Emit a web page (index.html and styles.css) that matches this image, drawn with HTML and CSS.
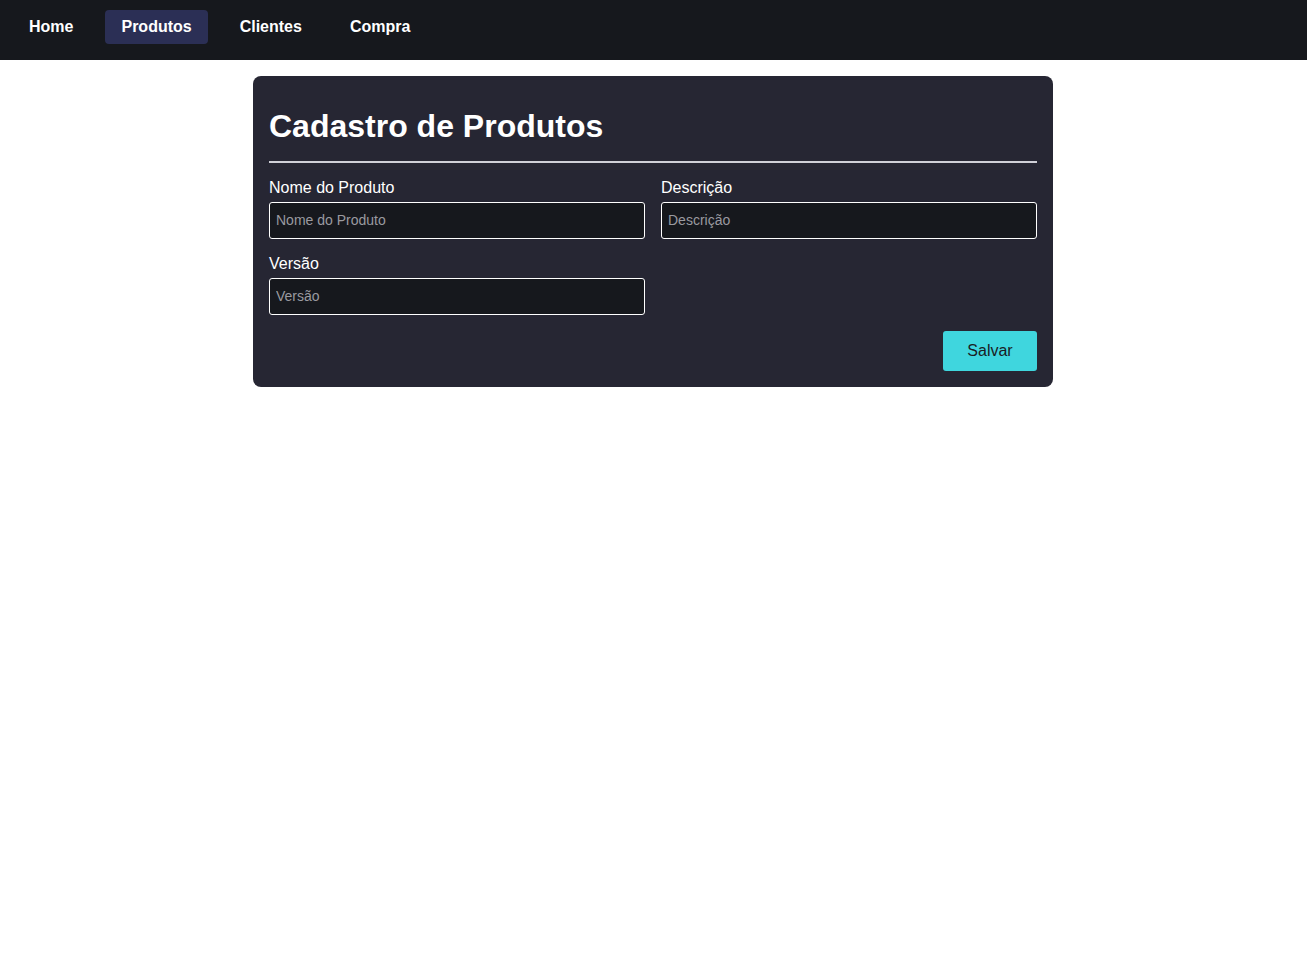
FILE: index.html
```html
<!DOCTYPE html>
<html lang="pt-BR">
<head>
<meta charset="utf-8">
<title>Cadastro de Produtos</title>
<link rel="stylesheet" href="styles.css">
</head>
<body>
<nav class="navbar">
  <a class="nav-link" href="#">Home</a>
  <a class="nav-link active" href="#">Produtos</a>
  <a class="nav-link" href="#">Clientes</a>
  <a class="nav-link" href="#">Compra</a>
</nav>
<main class="page">
  <section class="card">
    <h1 class="card-title">Cadastro de Produtos</h1>
    <hr class="divider">
    <form class="form">
      <div class="form-grid">
        <div class="field">
          <label class="field-label">Nome do Produto</label>
          <input class="field-input" type="text" placeholder="Nome do Produto">
        </div>
        <div class="field">
          <label class="field-label">Descrição</label>
          <input class="field-input" type="text" placeholder="Descrição">
        </div>
        <div class="field">
          <label class="field-label">Versão</label>
          <input class="field-input" type="text" placeholder="Versão">
        </div>
      </div>
      <div class="actions">
        <button class="btn-save" type="button">Salvar</button>
      </div>
    </form>
  </section>
</main>
</body>
</html>
```
FILE: styles.css
```css
* { box-sizing: border-box; }
body {
  margin: 0;
  background: #ffffff;
  font-family: "Liberation Sans", Arial, sans-serif;
}
.navbar {
  height: 60px;
  background: #16181d;
  display: flex;
  align-items: flex-start;
  gap: 16px;
  padding: 10px 13px 0;
}
.nav-link {
  color: #ffffff;
  text-decoration: none;
  font-weight: bold;
  font-size: 16px;
  line-height: 18px;
  padding: 8px 16px;
  border-radius: 4px;
}
.nav-link.active { background: #2b2f55; }
.page {
  display: flex;
  justify-content: center;
  padding-top: 16px;
  padding-right: 1px;
}
.card {
  width: 800px;
  background: #262633;
  border-radius: 8px;
  padding: 16px;
  color: #ffffff;
}
.card-title {
  margin: 16px 0 0;
  font-size: 32px;
  line-height: 37px;
  font-weight: bold;
}
.divider {
  border: 0;
  border-top: 2px solid #d0d0d8;
  margin: 16px 0 16px;
}
.form-grid {
  display: grid;
  grid-template-columns: 1fr 1fr;
  column-gap: 16px;
  row-gap: 16px;
}
.field { display: flex; flex-direction: column; gap: 5px; }
.field-label { font-size: 16px; line-height: 18px; }
.field-input {
  height: 37px;
  background: #16181d;
  border: 1px solid #ffffff;
  border-radius: 3px;
  color: #ffffff;
  padding: 0 6px 2px;
  font-family: "Liberation Sans", Arial, sans-serif;
  font-size: 14px;
}
.field-input::placeholder { color: #9a9aa0; }
.actions {
  display: flex;
  justify-content: flex-end;
  margin-top: 16px;
}
.btn-save {
  width: 94px;
  height: 40px;
  background: #3fd6de;
  border: 0;
  border-radius: 3px;
  color: #1a1d24;
  font-family: "Liberation Sans", Arial, sans-serif;
  font-size: 16px;
}
```
